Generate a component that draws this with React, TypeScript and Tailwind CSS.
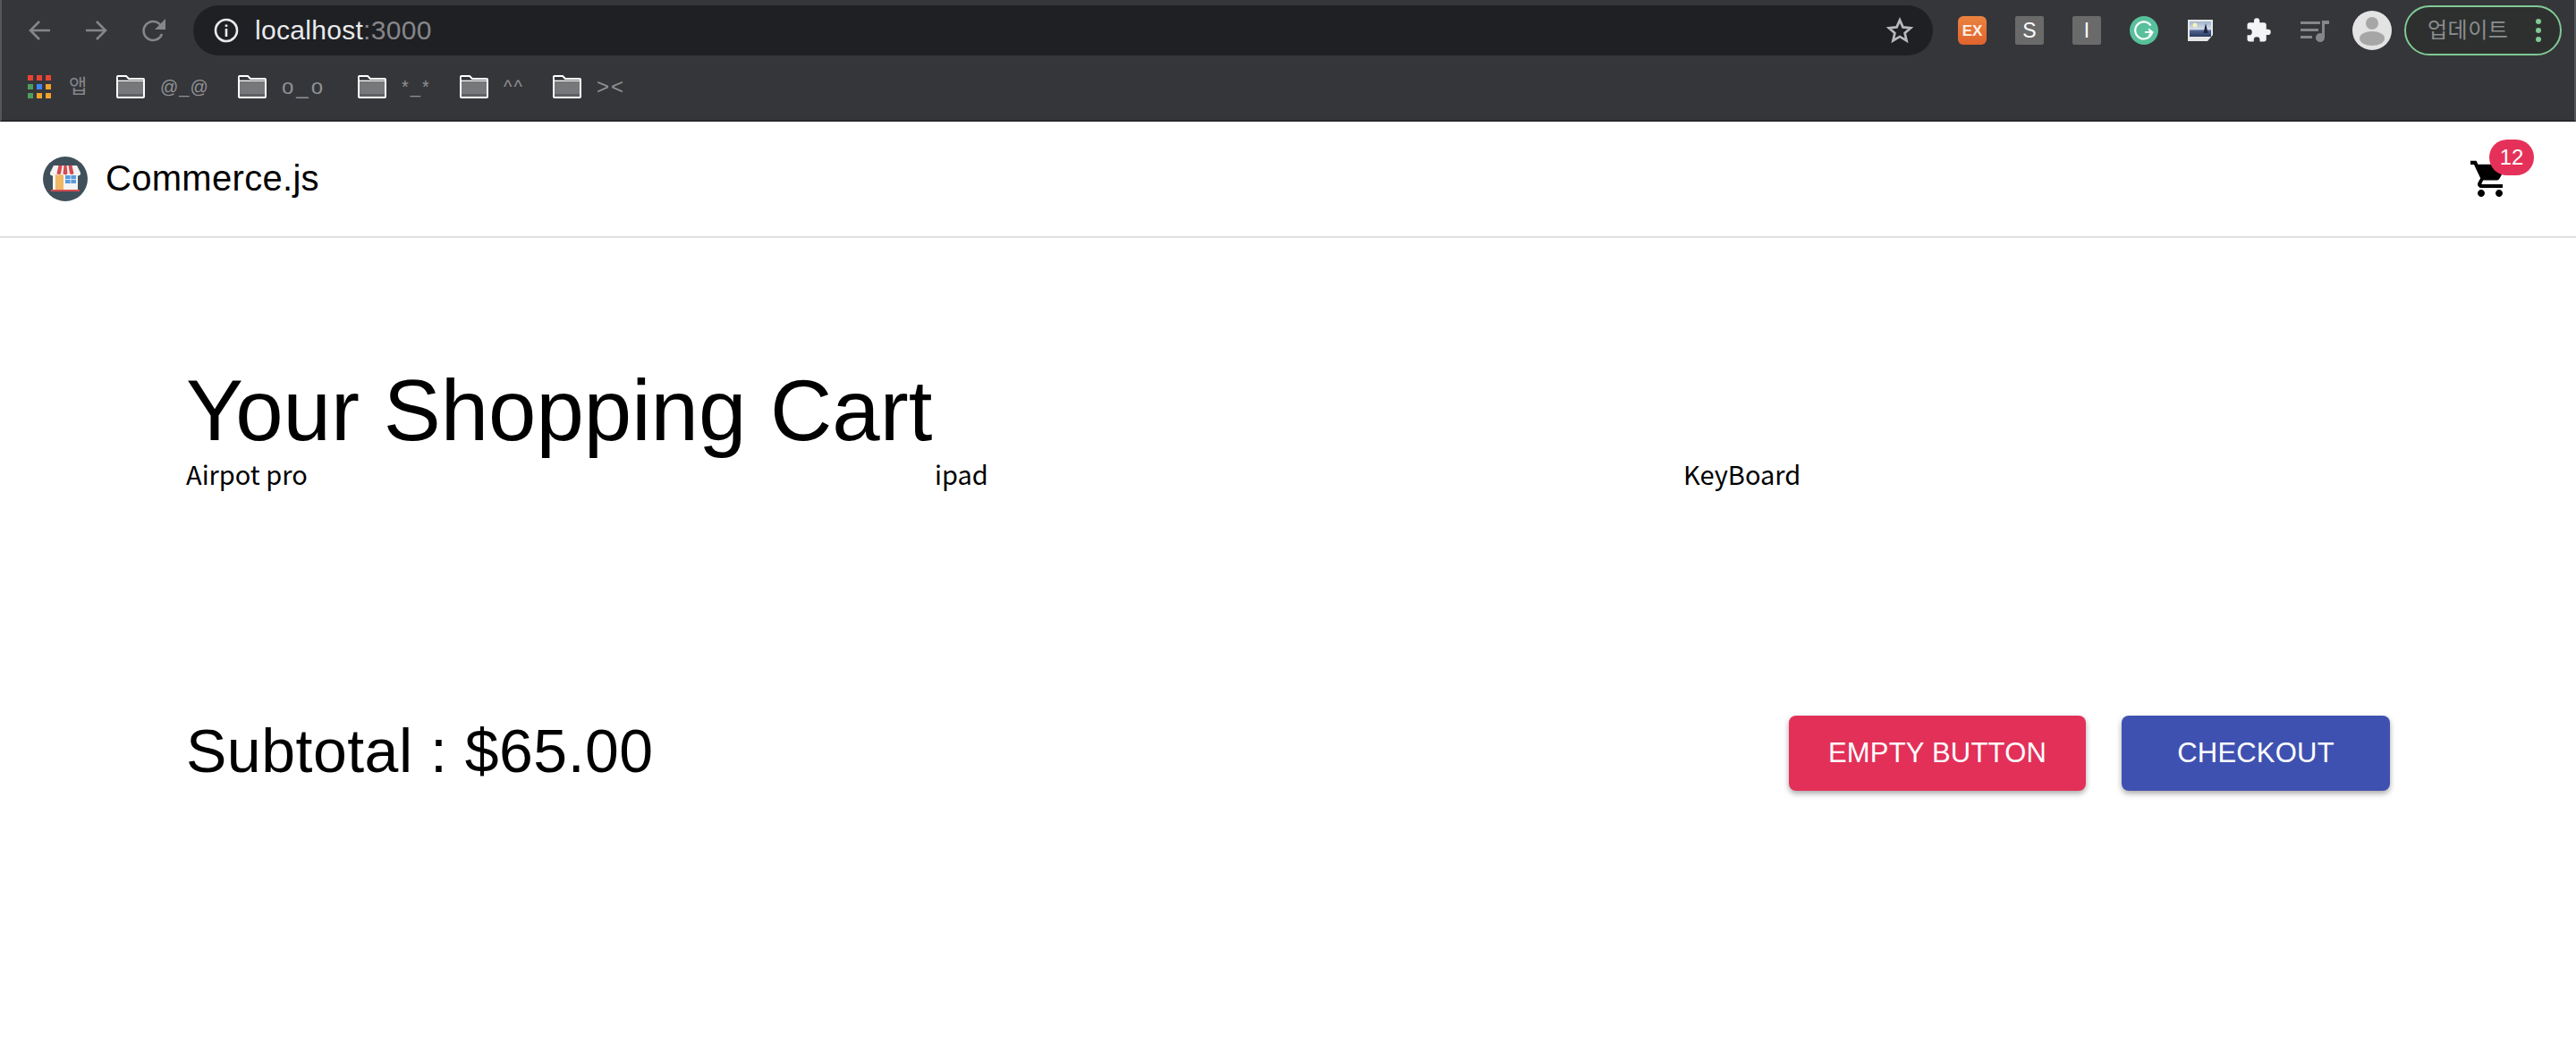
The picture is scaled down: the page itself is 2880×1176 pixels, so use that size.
import React from 'react';

const FONT = "font-['Liberation_Sans','Noto_Sans_CJK_KR',sans-serif]";

const NavIcon: React.FC<{ d: string; className?: string }> = ({ d, className }) => (
  <svg viewBox="0 0 28 28" className={`w-7 h-7 shrink-0 ${className ?? ''}`} fill="none" stroke="#85868a" strokeWidth="2.6">
    <path d={d} />
  </svg>
);

const Folder = () => (
  <svg viewBox="0 0 32 26" className="w-8 h-[26px] shrink-0">
    <path d="M1 4a2 2 0 0 1 1-3h9l3 3h16a1 1 0 0 1 1 1v19a1 1 0 0 1-1 1H2a1 1 0 0 1-1-1z" fill="#35363a" stroke="#fff" strokeWidth="2" />
    <path d="M2 8h28v13H2z" fill="#77787a" />
    <path d="M2 21h28v3H2z" fill="#5f6063" />
    <path d="M1 6.500h30" stroke="#fff" strokeWidth="1.600" />
  </svg>
);

const Bookmark: React.FC<{ label: string; className?: string; labelClass?: string }> = ({ label, className, labelClass }) => (
  <div className={`flex items-center gap-[17px] ${className ?? ''}`}>
    <Folder />
    <span className={`text-[20px] leading-none text-[#909194] ${labelClass ?? 'tracking-[2px]'}`}>{label}</span>
  </div>
);

const gridColors = ['#ea4335', '#ea4335', '#ea4335', '#4f9d5d', '#4285f4', '#eea32d', '#4f9d5d', '#eea32d', '#eea32d'];

const ExtTile: React.FC<{ letter: string }> = ({ letter }) => (
  <div className="w-8 h-8 ml-8 rounded-[2px] bg-[#6a6a6a] flex items-center justify-center text-[23px] leading-none text-white shrink-0">
    {letter}
  </div>
);

const BrowserChrome = () => (
  <div className="bg-[#35363a] border-x-2 border-x-[#55565a] border-b-2 border-b-[#26272a] h-[136px]">
    <div className="h-[68px] flex items-center pl-[28px] pr-[14px]">
      <NavIcon d="M26 14H4M14 4 4 14l10 10" />
      <NavIcon d="M2 14h22M14 4l10 10-10 10" className="ml-9" />
      <svg viewBox="0 0 28 28" className="w-7 h-7 ml-9 shrink-0">
        <path d="M23 18a10.500 10.500 0 1 1-2-10.500" fill="none" stroke="#85868a" strokeWidth="2.600" />
        <path d="M27 1v12H15z" fill="#85868a" />
      </svg>
      <div className="ml-[30px] flex-1 h-14 rounded-[28px] bg-[#1f2023] flex items-center pl-[23px] pr-[21px]">
        <svg viewBox="0 0 28 28" className="w-7 h-7 shrink-0">
          <circle cx="14" cy="14" r="12" fill="none" stroke="#e8eaed" strokeWidth="2.600" />
          <path d="M12.700 12h2.600v9h-2.600zM12.700 7.500h2.600v2.600h-2.600z" fill="#e8eaed" />
        </svg>
        <span className="ml-[18px] text-[30px] leading-none tracking-[0.3px] text-[#e8eaed]">
          localhost<span className="text-[#85868a]">:3000</span>
        </span>
        <svg viewBox="0 0 24 24" className="w-8 h-8 ml-auto shrink-0" fill="none" stroke="#b9babc" strokeWidth="2">
          <path d="m12 3.300 2.600 6 6.500.600-4.900 4.300 1.500 6.400-5.700-3.400-5.700 3.400 1.500-6.400-4.900-4.300 6.500-.600z" />
        </svg>
      </div>
      <div className="w-8 h-8 ml-7 rounded-[6px] bg-gradient-to-b from-[#ea8340] to-[#e0632e] flex items-center justify-center text-[17px] font-bold leading-none text-[#fdf1e8] shrink-0">
        EX
      </div>
      <ExtTile letter="S" />
      <ExtTile letter="I" />
      <svg viewBox="0 0 32 32" className="w-8 h-8 ml-8 shrink-0">
        <circle cx="16" cy="16" r="16" fill="#58c09b" />
        <path d="M23.500 10.500A9.500 9.500 0 1 0 25 18h-8" fill="none" stroke="#fff" strokeWidth="2.200" />
        <path d="m21 14.500 4.500 3.500-4 4" fill="none" stroke="#fff" strokeWidth="2" />
      </svg>
      <svg viewBox="0 0 28 24" className="w-7 h-6 ml-[33px] shrink-0">
        <defs>
          <linearGradient id="sky" x1="0" y1="0" x2="0" y2="1">
            <stop offset="0" stopColor="#9fb4cf" />
            <stop offset="0.5" stopColor="#d4dce8" />
            <stop offset="0.6" stopColor="#50668f" />
            <stop offset="1" stopColor="#2a3a62" />
          </linearGradient>
        </defs>
        <path d="M0 0h28v17l-6 7H0z" fill="#e6e6e6" />
        <rect x="2" y="2" width="24" height="17" fill="url(#sky)" />
        <circle cx="8" cy="6" r="2.500" fill="#f6f3b5" />
        <path d="m20 4 2.500 11h-5z" fill="#1d2540" />
      </svg>
      <svg viewBox="0 0 24 24" className="w-[30px] h-[30px] ml-9 shrink-0" fill="#f3f4f5">
        <path d="M20.500 11H19V7c0-1.100-.9-2-2-2h-4V3.500a2.500 2.500 0 0 0-5 0V5H4c-1.100 0-2 .9-2 2v3.800h1.500a2.700 2.700 0 0 1 0 5.400H2V20c0 1.100.9 2 2 2h3.800v-1.500a2.700 2.700 0 0 1 5.400 0V22H17c1.100 0 2-.9 2-2v-4h1.500a2.500 2.500 0 0 0 0-5z" />
      </svg>
      <svg viewBox="0 0 32 26" className="w-8 h-[26px] ml-[32px] shrink-0" fill="#85868a">
        <path d="M0 3h22v3H0zM0 11h20v3H0zM0 19h13v3H0z" />
        <path d="M24 2h8v4h-5v15a5 5 0 1 1-3-4.500z" />
      </svg>
      <svg viewBox="0 0 44 44" className="w-11 h-11 ml-[26px] shrink-0">
        <circle cx="22" cy="22" r="22" fill="#e3e3e3" />
        <circle cx="22" cy="14" r="7" fill="#a6a6a6" />
        <ellipse cx="22" cy="31" rx="14" ry="8" fill="#a6a6a6" />
      </svg>
      <div className="ml-[14px] w-[176px] h-14 rounded-[28px] border-2 border-[#81c995] bg-[#2d302f] flex items-center pl-[24px] shrink-0">
        <span className="text-[24px] leading-none tracking-[0.5px] text-[#8b8d8f]">업데이트</span>
        <div className="ml-[31px] flex flex-col gap-[4px]">
          <div className="w-[6px] h-[6px] rounded-full bg-[#81c995]" />
          <div className="w-[6px] h-[6px] rounded-full bg-[#81c995]" />
          <div className="w-[6px] h-[6px] rounded-full bg-[#81c995]" />
        </div>
      </div>
    </div>
    <div className="h-[66px] pb-2 flex items-center pl-[29px]">
      <div className="grid grid-cols-3 gap-x-1 gap-y-1 w-[26px] shrink-0">
        {gridColors.map((c, i) => (
          <div key={i} className="h-[6px] w-[6px]" style={{ backgroundColor: c }} />
        ))}
      </div>
      <span className="ml-5 w-[53px] text-[22px] leading-none text-[#85868a]">앱</span>
      <Bookmark label="@_@" className="w-[136px]" labelClass="tracking-[1px]" />
      <Bookmark label="o_o" className="w-[134px]" labelClass="text-[24px] tracking-[3px]" />
      <Bookmark label="*_*" className="w-[114px]" />
      <Bookmark label="^^" className="w-[104px]" />
      <Bookmark label="><" labelClass="text-[24px] tracking-[2px]" />
    </div>
  </div>
);

const StoreLogo = () => (
  <svg viewBox="0 0 50 50" className="w-[50px] h-[50px] shrink-0">
    <circle cx="25" cy="25" r="25" fill="#3f505b" />
    <rect x="11" y="19" width="28" height="19" fill="#f3f3f3" />
    <rect x="14" y="20" width="9" height="17" fill="#f0b765" />
    <rect x="25" y="21" width="12" height="9" fill="#5b9bdc" />
    <path d="M31 21v9M25 25.500h12" stroke="#f3f3f3" strokeWidth="0.800" />
    <rect x="9" y="37" width="32" height="2" fill="#d64a50" />
    <path d="M12 10h26l4 8a3 3 0 0 1-6 1 3 3 0 0 1-5.500 0 3 3 0 0 1-5.500 0 3 3 0 0 1-5.500 0 3 3 0 0 1-5.500 0 3 3 0 0 1-6-1z" fill="#f3f3f3" />
    <path d="M17.500 10h4l-1.500 9a3 3 0 0 1-4.500 0zM28.500 10h4l2 9a3 3 0 0 1-4.500 0z" fill="#d64a50" />
    <path d="M23.500 10h3l1 9a3 3 0 0 1-5 0z" fill="#d64a50" />
  </svg>
);

const CartIcon = () => (
  <svg viewBox="0 0 24 24" className="w-12 h-12" fill="#000">
    <path d="M7 18c-1.100 0-1.990.9-1.990 2S5.900 22 7 22s2-.9 2-2-.9-2-2-2zM1 2v2h2l3.600 7.590-1.350 2.450c-.16.28-.25.61-.25.96 0 1.100.9 2 2 2h12v-2H7.420c-.14 0-.25-.11-.25-.25l.03-.12.9-1.830h7.450c.75 0 1.410-.41 1.750-1.030l3.580-6.470c.08-.14.12-.31.12-.48 0-.55-.45-1-1-1H5.210l-.94-2H1zm16 16c-1.100 0-1.990.9-1.990 2s.89 2 1.990 2 2-.9 2-2-.9-2-2-2z" />
  </svg>
);

const NavBar = () => (
  <div className="h-[130px] border-b-2 border-[#e0e0e0] flex items-center justify-between pl-12 pr-[72px]">
    <div className="flex items-center gap-5">
      <StoreLogo />
      <h6 className="text-[40px] leading-none tracking-[0.3px] text-black mb-[2px]">Commerce.js</h6>
    </div>
    <div className="relative">
      <CartIcon />
      <span className="absolute -top-5 left-[23px] w-[50px] h-10 rounded-[20px] bg-[#e53159] flex items-center justify-center text-[24px] leading-none text-white">
        12
      </span>
    </div>
  </div>
);

const items = ['Airpot pro', 'ipad', 'KeyBoard'];

export default function App() {
  return (
    <div className={`min-h-[1176px] bg-white ${FONT}`}>
      <BrowserChrome />
      <NavBar />
      <main className="px-[208px] pt-[144px]">
        <h3 className="text-[96px] leading-[97px] text-black">Your Shopping Cart</h3>
        <div className="grid grid-cols-[837px_837px_1fr]">
          {items.map((item) => (
            <p key={item} className="font-['Noto_Sans_CJK_KR',sans-serif] text-[29px] leading-[45px] text-black">
              {item}
            </p>
          ))}
        </div>
        <div className="mt-[245px] flex items-center justify-between">
          <h4 className="text-[68px] leading-[84px] tracking-[0.5px] text-black mb-[6px]">Subtotal : $65.00</h4>
          <div className="flex gap-10">
            <button className="w-[332px] h-[84px] rounded-lg bg-[#e33059] text-[31px] tracking-[0.2px] text-white shadow-[0_3px_6px_rgba(0,0,0,0.35)]">
              EMPTY BUTTON
            </button>
            <button className="w-[300px] h-[84px] rounded-lg bg-[#3f51b0] text-[31px] tracking-[0.2px] text-white shadow-[0_3px_6px_rgba(0,0,0,0.35)]">
              CHECKOUT
            </button>
          </div>
        </div>
      </main>
    </div>
  );
}
